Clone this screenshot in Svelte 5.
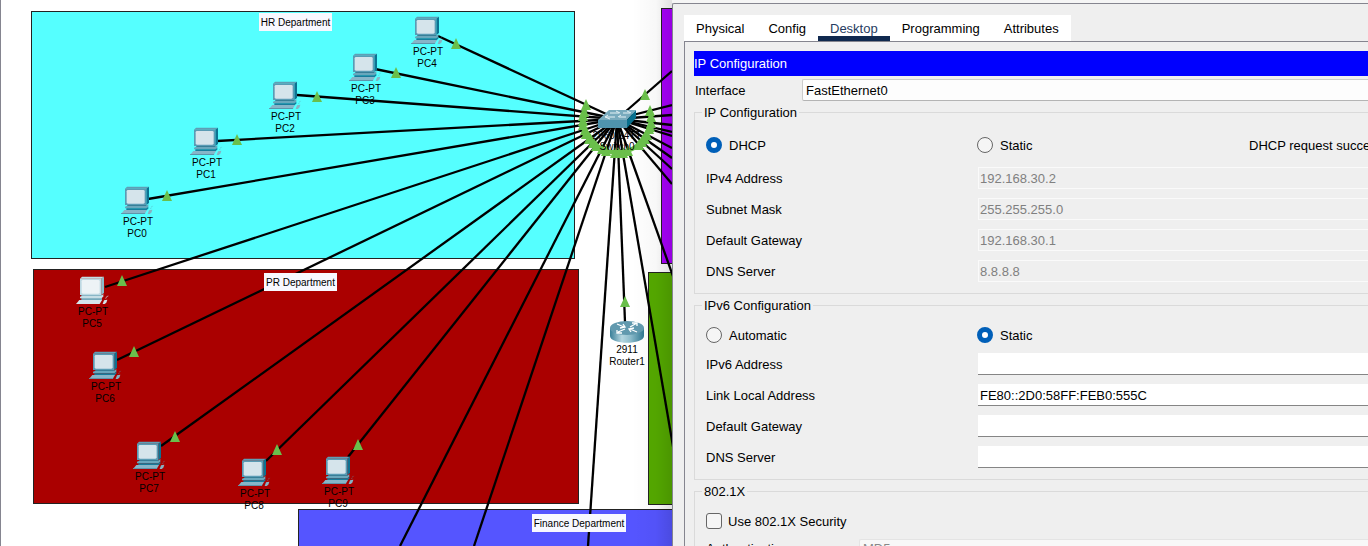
<script>
  const hub = { x: 617, y: 119 };

  const pcs = [
    { name: 'PC4', x: 411, y: 17, port: [438, 36], light: [456, 44] },
    { name: 'PC3', x: 349, y: 54, port: [375, 69], light: [396, 73] },
    { name: 'PC2', x: 269, y: 82, port: [297, 95], light: [317, 97] },
    { name: 'PC1', x: 190, y: 128, port: [217, 141], light: [237, 140] },
    { name: 'PC0', x: 121, y: 187, port: [148, 199], light: [167, 196] },
    { name: 'PC5', x: 76, y: 277, port: [105, 287], light: [122, 281], selected: true },
    { name: 'PC6', x: 89, y: 352, port: [117, 360], light: [134, 352] },
    { name: 'PC7', x: 133, y: 442, port: [161, 446], light: [175, 437] },
    { name: 'PC8', x: 238, y: 459, port: [266, 461], light: [277, 450] },
    { name: 'PC9', x: 322, y: 457, port: [348, 457], light: [358, 445] }
  ];

  const trunks = [
    [400, 546], [474, 546], [588, 546], [625, 322], [674, 452], [674, 279],
    [672, 184], [672, 169], [672, 158], [672, 148], [672, 136], [672, 132],
    [672, 125], [672, 115], [672, 105], [672, 71]
  ];

  const ends = [...pcs.map((p) => p.port), ...trunks];

  // link lights sit on a ring around the switch, one on each cable
  const ring = ends.map(([x, y]) => {
    const d = Math.hypot(x - hub.x, y - hub.y);
    return [
      Math.round(hub.x + ((x - hub.x) / d) * 34),
      Math.round(hub.y + ((y - hub.y) / d) * 34)
    ];
  });

  const notes = [
    { text: 'HR Department', x: 259, y: 13, w: 73 },
    { text: 'PR Department', x: 264, y: 273, w: 73 },
    { text: 'Finance Department', x: 532, y: 514, w: 94 }
  ];

  const tabs = ['Physical', 'Config', 'Desktop', 'Programming', 'Attributes'];
  let active = $state('Desktop');
  let mode4 = $state('dhcp');
  let mode6 = $state('static');
  let secure = $state(false);

  const v4 = [
    ['IPv4 Address', '192.168.30.2'],
    ['Subnet Mask', '255.255.255.0'],
    ['Default Gateway', '192.168.30.1'],
    ['DNS Server', '8.8.8.8']
  ];
  const v6 = [
    ['IPv6 Address', ''],
    ['Link Local Address', 'FE80::2D0:58FF:FEB0:555C'],
    ['Default Gateway', ''],
    ['DNS Server', '']
  ];
</script>

{#snippet lamp(x, y)}
  <path d="M{x} {y - 6}L{x + 5} {y + 5}H{x - 5}Z" fill="#6abf4b" />
{/snippet}

<main>
  <section class="canvas">
    <svg viewBox="0 0 672 546" preserveAspectRatio="xMinYMin slice">
      <defs>
        <linearGradient id="shade">
          <stop offset="0" stop-color="#000" stop-opacity="0" />
          <stop offset="0.6" stop-color="#000" stop-opacity="0.03" />
          <stop offset="1" stop-color="#000" stop-opacity="0.12" />
        </linearGradient>
        <linearGradient id="drum">
          <stop offset="0" stop-color="#397f98" />
          <stop offset="0.35" stop-color="#b5d6e0" />
          <stop offset="0.6" stop-color="#8dbccb" />
          <stop offset="1" stop-color="#2f7690" />
        </linearGradient>
        <g id="pc">
          <path d="M12 8L18 2H84L76 8Z" fill="#5f9eb5" />
          <path d="M76 8L84 2V51L76 57Z" fill="#0d7292" />
          <path d="M12 8H76V57H12Z" fill="#599bb4" />
          <rect x="17" y="12" width="54" height="41" rx="4" fill="#d5e4eb" />
          <path d="M20 57H78L74 62H16Z" fill="#28718b" />
          <path d="M12 62L20 59H76L82 54V62L76 67H12Z" fill="#69a7bc" />
          <path d="M16 67H76L82 62V68L76 73H16Z" fill="#187c9b" />
          <path d="M10 72H78L71 84H0Z" fill="#87b5c8" />
          <path d="M1 81H73L71 84H0Z" fill="#5e94aa" />
          <path d="M84 73L94 71L91 80L86 84H80Z" fill="#86b3c4" />
          <path d="M89 68L92 62L97 60" fill="none" stroke="#5e9eb2" stroke-width="2" stroke-dasharray="3 3" />
        </g>
        <g id="pc-selected">
          <path d="M12 8L18 2H84L76 8Z" fill="#c3dde5" />
          <path d="M76 8L84 2V51L76 57Z" fill="#8bbccb" />
          <path d="M12 8H76V57H12Z" fill="#bdd8e2" />
          <rect x="17" y="12" width="54" height="41" rx="4" fill="#edf3f6" />
          <path d="M16 57H78V73H16Z" fill="#75a9bb" />
          <path d="M12 62L20 59H76L82 54V62L76 67H12Z" fill="#c5dde5" />
          <path d="M10 72H78L71 84H0Z" fill="#d4e5ec" />
          <path d="M84 73L94 71L91 80L86 84H80Z" fill="#d4e5ec" />
          <path d="M89 68L92 62L97 60" fill="none" stroke="#c5dde5" stroke-width="2" />
        </g>
      </defs>

      <rect class="zone" x="31.5" y="11.5" width="543" height="247" fill="#55ffff" />
      <rect class="zone" x="33.5" y="269.5" width="545" height="234" fill="#aa0000" />
      <rect class="zone" x="298.5" y="509.5" width="400" height="60" fill="#5555ff" />
      <rect class="zone" x="661.5" y="8.5" width="60" height="255" fill="#aa00ff" />
      <rect class="zone" x="648.5" y="272.5" width="60" height="232" fill="#55aa00" />
      <rect x="632" y="0" width="40" height="546" fill="url(#shade)" />

      <g stroke="#000" stroke-width="2.3">
        {#each ends as [x, y]}
          <line x1={hub.x} y1={hub.y} x2={x} y2={y} />
        {/each}
      </g>

      <path d="M586 108Q578 122 589 135Q598 153 617 152Q636 153 645 135Q653 125 650 110" fill="none" stroke="#6abf4b" stroke-width="4" />
      {#each ring as [x, y], i}
        {#if i < ring.length - 1}{@render lamp(x, y)}{/if}
      {/each}
      {@render lamp(645, 95)}
      {@render lamp(625, 302)}

      <g transform="translate(598 110)">
        <path d="M0 10L11 0H38L29 10Z" fill="#78aabd" />
        <path d="M29 10L38 0V8L29 18Z" fill="#08708e" />
        <path d="M0 10H29V18H0Z" fill="#4f94ae" />
        <path d="M12 3H21M18 1L22 3M8 7H17M10 5L7 7L12 9M25 3H32M29 1L33 3M21 7H28M23 5L20 7" fill="none" stroke="#e4f1f5" stroke-width="1" />
      </g>
      <text x="617" y="139">2960-24TT</text>
      <text x="617" y="150">Switch0</text>

      <g transform="translate(610 320)">
        <path d="M0 8V16C0 25 34 25 34 16V8Z" fill="url(#drum)" />
        <ellipse cx="17" cy="8" rx="17" ry="7" fill="#6199ae" />
        <path d="M7 4L14 7M10 8L15 7L13 4M27 3L20 7M22 3H27V6M15 9L8 12M12 13H7V10M20 9L27 12M24 8L19 9L21 12" fill="none" stroke="#fff" stroke-width="1.3" />
      </g>
      <text x="627" y="353">2911</text>
      <text x="627" y="365">Router1</text>

      {#each pcs as p}
        <use href={p.selected ? '#pc-selected' : '#pc'} transform="translate({p.x} {p.y - 1}) scale(0.3333)" />
        {@render lamp(p.light[0], p.light[1])}
        <text x={p.x + 17} y={p.y + 38}>PC-PT</text>
        <text x={p.x + 16} y={p.y + 50}>{p.name}</text>
      {/each}

      {#each notes as n}
        <rect x={n.x} y={n.y} width={n.w} height="18" fill="#f8f8ff" />
        <text x={n.x + n.w / 2} y={n.y + 13}>{n.text}</text>
      {/each}
      <path d="M0.5 0V546" stroke="#858590" />
    </svg>
  </section>

  <section class="dialog">
    <div class="frame">
      <nav>
        {#each tabs as t}
          <button class:active={active === t} onclick={() => (active = t)}>{t}</button>
        {/each}
      </nav>
      <div class="pane">
        <h1>IP Configuration</h1>
        <div class="interface">
          <label for="iface">Interface</label>
          <select id="iface"><option>FastEthernet0</option></select>
        </div>

        <fieldset>
          <legend>IP Configuration</legend>
          <div class="row modes first">
            <label><input type="radio" name="v4" value="dhcp" bind:group={mode4} /><span>DHCP</span></label>
            <label><input type="radio" name="v4" value="static" bind:group={mode4} /><span>Static</span></label>
            <output>DHCP request successful.</output>
          </div>
          <div class="fields">
            {#each v4 as [label, value], i}
              <div class="row">
                <label for="v4-{i}">{label}</label>
                <input type="text" id="v4-{i}" {value} disabled={mode4 === 'dhcp'} />
              </div>
            {/each}
          </div>
        </fieldset>

        <fieldset>
          <legend>IPv6 Configuration</legend>
          <div class="row modes">
            <label><input type="radio" name="v6" value="auto" bind:group={mode6} /><span>Automatic</span></label>
            <label><input type="radio" name="v6" value="static" bind:group={mode6} /><span>Static</span></label>
          </div>
          <div class="fields">
            {#each v6 as [label, value], i}
              <div class="row">
                <label for="v6-{i}">{label}</label>
                <input type="text" id="v6-{i}" {value} />
              </div>
            {/each}
          </div>
        </fieldset>

        <fieldset>
          <legend>802.1X</legend>
          <div class="modes security">
            <label><input type="checkbox" bind:checked={secure} /><span>Use 802.1X Security</span></label>
          </div>
          <div class="auth">
            <label for="auth">Authentication</label>
            <select id="auth" disabled={!secure}><option>MD5</option></select>
          </div>
        </fieldset>
      </div>
    </div>
  </section>
</main>

<style>
  :global(body) {
    margin: 0;
    overflow: hidden;
  }
  main {
    display: grid;
    grid-template-columns: minmax(0, 672fr) minmax(0, 696fr);
    height: 100vh;
    overflow: hidden;
    background: #fff;
    color: #000;
    font: 13px/18px "Liberation Sans", Arial, sans-serif;
  }
  .canvas {
    overflow: hidden;
  }
  svg {
    display: block;
    width: 100%;
    height: 100%;
  }
  .zone {
    stroke: #222;
    stroke-width: 1;
  }
  text {
    font-size: 10px;
    text-anchor: middle;
  }
  .dialog {
    padding-top: 3px;
    overflow: hidden;
    background: #f5f5f5;
  }
  .frame {
    box-sizing: border-box;
    min-height: 100%;
    padding: 11px 0 0 11px;
    border: solid #85858f;
    border-width: 1px 0 0 1px;
    border-top-left-radius: 2px;
    background: #efefef;
  }
  nav {
    display: flex;
    width: max-content;
    background: #fff;
  }
  button {
    height: 26px;
    padding: 6px 12px 0;
    border: 0;
    border-bottom: 5px solid transparent;
    background: none;
    color: #000;
    font: inherit;
    line-height: 15px;
  }
  button.active {
    border-color: #10294f;
    color: #263c61;
  }
  .pane {
    padding: 9px 0 0 9px;
    border: solid #85858f;
    border-width: 1px 0 0 1px;
    white-space: nowrap;
  }
  h1 {
    margin: 0 0 3px;
    background: #00f;
    color: #fff;
    font: inherit;
    line-height: 25px;
  }
  .interface {
    display: grid;
    grid-template-columns: 107px minmax(0, 1fr);
    align-items: center;
    margin: 0 0 1px 1px;
  }
  .interface label,
  .fields label,
  .modes span,
  output {
    padding-top: 2px;
  }
  select,
  input[type='text'] {
    box-sizing: border-box;
    width: 100%;
    height: 22px;
    margin: 0;
    border: 0;
    border-radius: 0;
    outline: 0;
    font: inherit;
    color: #000;
  }
  select {
    appearance: none;
    padding: 1px 3px 0;
    border: 1px solid #ccc;
    border-right: 0;
    border-bottom-color: #b4b4b4;
    border-radius: 2px 0 0 2px;
    background: #fdfdfd;
  }
  select:disabled {
    padding: 0 3px 2px;
    border-color: #e4e4e4;
    background: #f8f8f8;
    color: #888;
    opacity: 1;
  }
  input[type='text'] {
    padding: 1px 2px 0;
    border-bottom: 1px solid #858585;
    background: #fff;
  }
  input[type='text']:disabled {
    padding: 0 1px;
    border: 1px solid #fafafa;
    border-right: 0;
    background: #efefef;
    color: #808080;
  }
  fieldset {
    min-width: 0;
    margin: 0 0 1px;
    padding: 0 0 11px 11px;
    border: 1px solid #dadada;
    border-right: 0;
  }
  legend {
    margin-left: -4px;
    padding: 2px 2px 0;
  }
  .row {
    display: grid;
    grid-template-columns: 272px minmax(0, 1fr);
    align-items: center;
  }
  .modes {
    height: 24px;
    padding: 8px 0 6px;
  }
  .modes.row {
    grid-template-columns: 271px 272px minmax(0, 1fr);
  }
  .modes.first {
    padding: 11px 0 10px;
  }
  .modes label {
    display: flex;
    align-items: center;
    gap: 7px;
  }
  .security label {
    height: 24px;
    gap: 6px;
  }
  .fields {
    display: grid;
    gap: 9px;
  }
  input[type='radio'],
  input[type='checkbox'] {
    appearance: none;
    box-sizing: border-box;
    width: 16px;
    height: 16px;
    margin: 0;
    border: 1px solid #666;
    border-radius: 50%;
    background: #f5f5f5;
  }
  input[type='radio']:checked {
    border: 5px solid #005fb8;
    background: #fff;
  }
  input[type='checkbox'] {
    border-radius: 3px;
  }
  input[type='checkbox']:checked {
    background: #005fb8;
  }
  .auth {
    display: grid;
    grid-template-columns: 153px minmax(0, 1fr);
    align-items: center;
  }
  .auth label {
    padding-bottom: 2px;
  }
</style>
